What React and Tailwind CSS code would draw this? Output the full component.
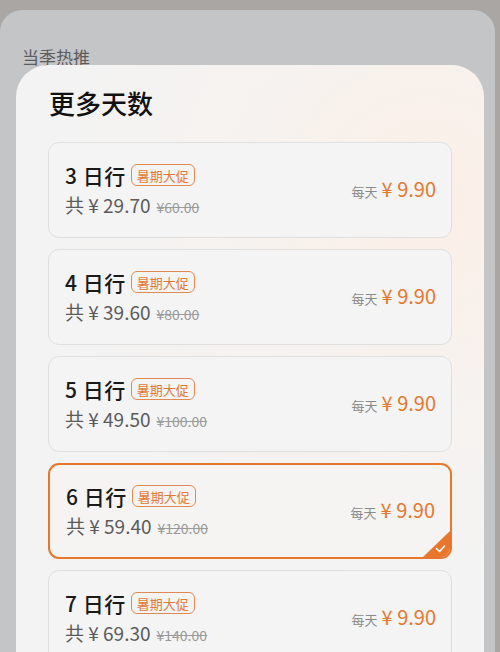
import React from "react";

const items = [
  { d: 3, total: "29.70", orig: "60.00" },
  { d: 4, total: "39.60", orig: "80.00" },
  { d: 5, total: "49.50", orig: "100.00" },
  { d: 6, total: "59.40", orig: "120.00", selected: true },
  { d: 7, total: "69.30", orig: "140.00" },
];

function Card({ it }) {
  return (
    <div
      className={
        "relative h-[96px] shrink-0 rounded-[11px] flex items-center justify-between pl-[16px] pr-[15px] overflow-hidden " +
        (it.selected
          ? "border-2 border-[#e8772d] bg-[#f5f4f3]"
          : "border border-[#dfdfdf] bg-[#f4f4f4]")
      }
    >
      <div className="flex flex-col">
        <div className="flex items-center h-[30px]">
          <span className="text-[21px] leading-[30px] text-[#1a1a1a] font-medium tracking-[0.5px]">
            {it.d} 日行
          </span>
          <span className="ml-[5px] h-[22px] px-[5px] flex items-center rounded-[6px] border-[1.5px] border-[#e08a52] text-[#e27a35] text-[13px] leading-none">
            暑期大促
          </span>
        </div>
        <div className="flex items-baseline h-[30px]">
          <span className="text-[19px] text-[#5b5b5b] leading-[30px]">共 ¥ {it.total}</span>
          <span className="ml-[6px] text-[14px] text-[#9a9a9a] line-through leading-[30px]">¥{it.orig}</span>
        </div>
      </div>
      <div className="flex items-baseline -mt-[2px]">
        <span className="text-[13px] text-[#8a8a8a]">每天</span>
        <span className="ml-[4px] text-[20px] text-[#e5782f]">¥ 9.90</span>
      </div>
      {it.selected && (
        <div className="absolute right-0 bottom-0 w-[27px] h-[26px]">
          <svg width="27" height="26" viewBox="0 0 27 26">
            <polygon points="27,0 27,26 0,26" fill="#e8772d" />
            <path d="M13.5 17.5 L16.5 20.5 L21.5 15" stroke="#fff" strokeWidth="1.6" fill="none" strokeLinecap="round" strokeLinejoin="round" />
          </svg>
        </div>
      )}
    </div>
  );
}

export default function App() {
  return (
    <div
      className="w-[500px] h-[652px] overflow-hidden bg-[#a9a6a3] pt-[10px]"
      style={{ fontFamily: '"Noto Sans CJK SC", "Noto Sans", sans-serif' }}
    >
      <div className="mr-[5px] h-full rounded-t-[22px] bg-[#c4c5c7] pt-[35px]">
        <div className="pl-[22px] text-[17px] leading-[24px] text-[#5c5c5c]">当季热推</div>
        <div className="relative -mt-[4px] ml-[16px] w-[468px] h-[620px] rounded-t-[32px] bg-[radial-gradient(circle_at_88%_22%,#fbefe6_0%,#f6f2ef_30%,#f3f3f3_60%)] px-[32px] pt-[19px]">
          <div className="pl-[1px] text-[26px] leading-[38px] text-[#111] font-medium">更多天数</div>
          <div className="mt-[20px] flex flex-col gap-[11px]">
            {items.map((it) => (
              <Card key={it.d} it={it} />
            ))}
          </div>
        </div>
      </div>
    </div>
  );
}
